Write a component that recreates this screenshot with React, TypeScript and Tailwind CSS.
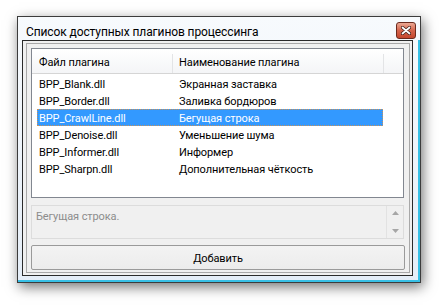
import React from 'react';

const plugins = [
  { file: 'BPP_Blank.dll', name: 'Экранная заставка' },
  { file: 'BPP_Border.dll', name: 'Заливка бордюров' },
  { file: 'BPP_CrawlLine.dll', name: 'Бегущая строка' },
  { file: 'BPP_Denoise.dll', name: 'Уменьшение шума' },
  { file: 'BPP_Informer.dll', name: 'Информер' },
  { file: 'BPP_Sharpn.dll', name: 'Дополнительная чёткость' },
];

const CloseButton: React.FC = () => (
  <div className="flex h-[17px] w-[20px] items-center justify-center rounded-[3px] border border-[#6b2a1e] bg-gradient-to-b from-[#eba894] via-[#d5644c] to-[#c4462c]">
    <svg width="10" height="9" viewBox="0 0 10 9">
      <path d="M1.5 1.5 L8.5 7.5 M8.5 1.5 L1.5 7.5" stroke="#3a1a14" strokeWidth="3.2" strokeLinecap="round" />
      <path d="M1.5 1.5 L8.5 7.5 M8.5 1.5 L1.5 7.5" stroke="#ffffff" strokeWidth="1.8" strokeLinecap="round" />
    </svg>
  </div>
);

export default function App() {
  const selected = 2;

  return (
    <div className="h-[305px] w-[439px] bg-white pl-[17px] pt-[16px] font-['Roboto',sans-serif] text-[11px] tracking-[-0.1px] text-black">
      <div className="flex h-[267px] w-[404px] flex-col border border-[#3c3c3c] bg-gradient-to-b from-[#f7fafd] to-[#e4edf7] shadow-[2px_4px_12px_rgba(0,0,0,0.55)]">
        {/* title bar */}
        <div className="flex h-[23px] items-center justify-between pl-[8px] pr-[4px] pt-[4px]">
          <span className="mt-[3px] text-[12px] leading-none tracking-[-0.1px]">Список доступных плагинов процессинга</span>
          <CloseButton />
        </div>

        <div className="flex flex-1 border-b-2 border-r-2 border-[#37c0e6] pb-[4px] pl-[4px] pr-[5px]">
          {/* client area */}
          <div className="h-[236px] w-[391px] border border-[#2a2a2a] bg-[#f0f0f0] pb-[2px] pl-[3px] pr-[2px] pt-[2px]">
            <div className="flex h-full w-full flex-col border border-[#a8a8a8] px-[4px] pt-[4px]">
              {/* list view */}
              <div className="h-[150px] w-[373px] border border-[#828790] bg-white">
                <div className="flex h-[25px] border-b border-[#d5d5d5] bg-gradient-to-b from-white to-[#f4f5f7] pt-[5px]">
                  <div className="flex w-[141px] items-center border-r border-[#e3e4e6] pl-[7px]">Файл плагина</div>
                  <div className="flex w-[211px] items-center border-r border-[#e3e4e6] pl-[6px]">Наименование плагина</div>
                  <div className="flex-1" />
                </div>
                <div className="mt-[1px] flex flex-col">
                  {plugins.map((p, i) => (
                    <div key={p.file} className="flex h-[17px] items-center">
                      <div
                        className={
                          i === selected
                            ? 'ml-[5px] flex h-[17px] w-[346px] items-center border border-dotted border-[#c8925a] bg-[#3399ff] pt-[3px] text-white'
                            : 'ml-[5px] flex h-[17px] w-[346px] items-center border border-transparent pt-[3px]'
                        }
                      >
                        <span className="w-[141px] pl-[1px]">{p.file}</span>
                        <span>{p.name}</span>
                      </div>
                    </div>
                  ))}
                </div>
              </div>

              {/* description memo */}
              <div className="mt-[7px] flex h-[34px] w-[373px] border border-[#dcdcdc] bg-[#f0f0f0]">
                <div className="flex-1 pl-[4px] pt-[3px] text-[#8c8c8c]">Бегущая строка.</div>
                <div className="flex w-[17px] flex-col items-center justify-between border-l border-[#e2e2e2] py-[5px]">
                  <svg width="7" height="4" viewBox="0 0 7 4">
                    <path d="M0 4 L3.5 0 L7 4 Z" fill="#a6a6a6" />
                  </svg>
                  <svg width="7" height="4" viewBox="0 0 7 4">
                    <path d="M0 0 L7 0 L3.5 4 Z" fill="#a6a6a6" />
                  </svg>
                </div>
              </div>

              {/* add button */}
              <button className="mt-[6px] flex h-[25px] w-[374px] items-center justify-center rounded-[2px] border border-[#9a9a9a] bg-gradient-to-b from-[#f3f3f3] to-[#ececec] pt-[3px] text-[11px] tracking-[-0.1px] text-black">
                Добавить
              </button>
            </div>
          </div>
        </div>
      </div>
    </div>
  );
}
